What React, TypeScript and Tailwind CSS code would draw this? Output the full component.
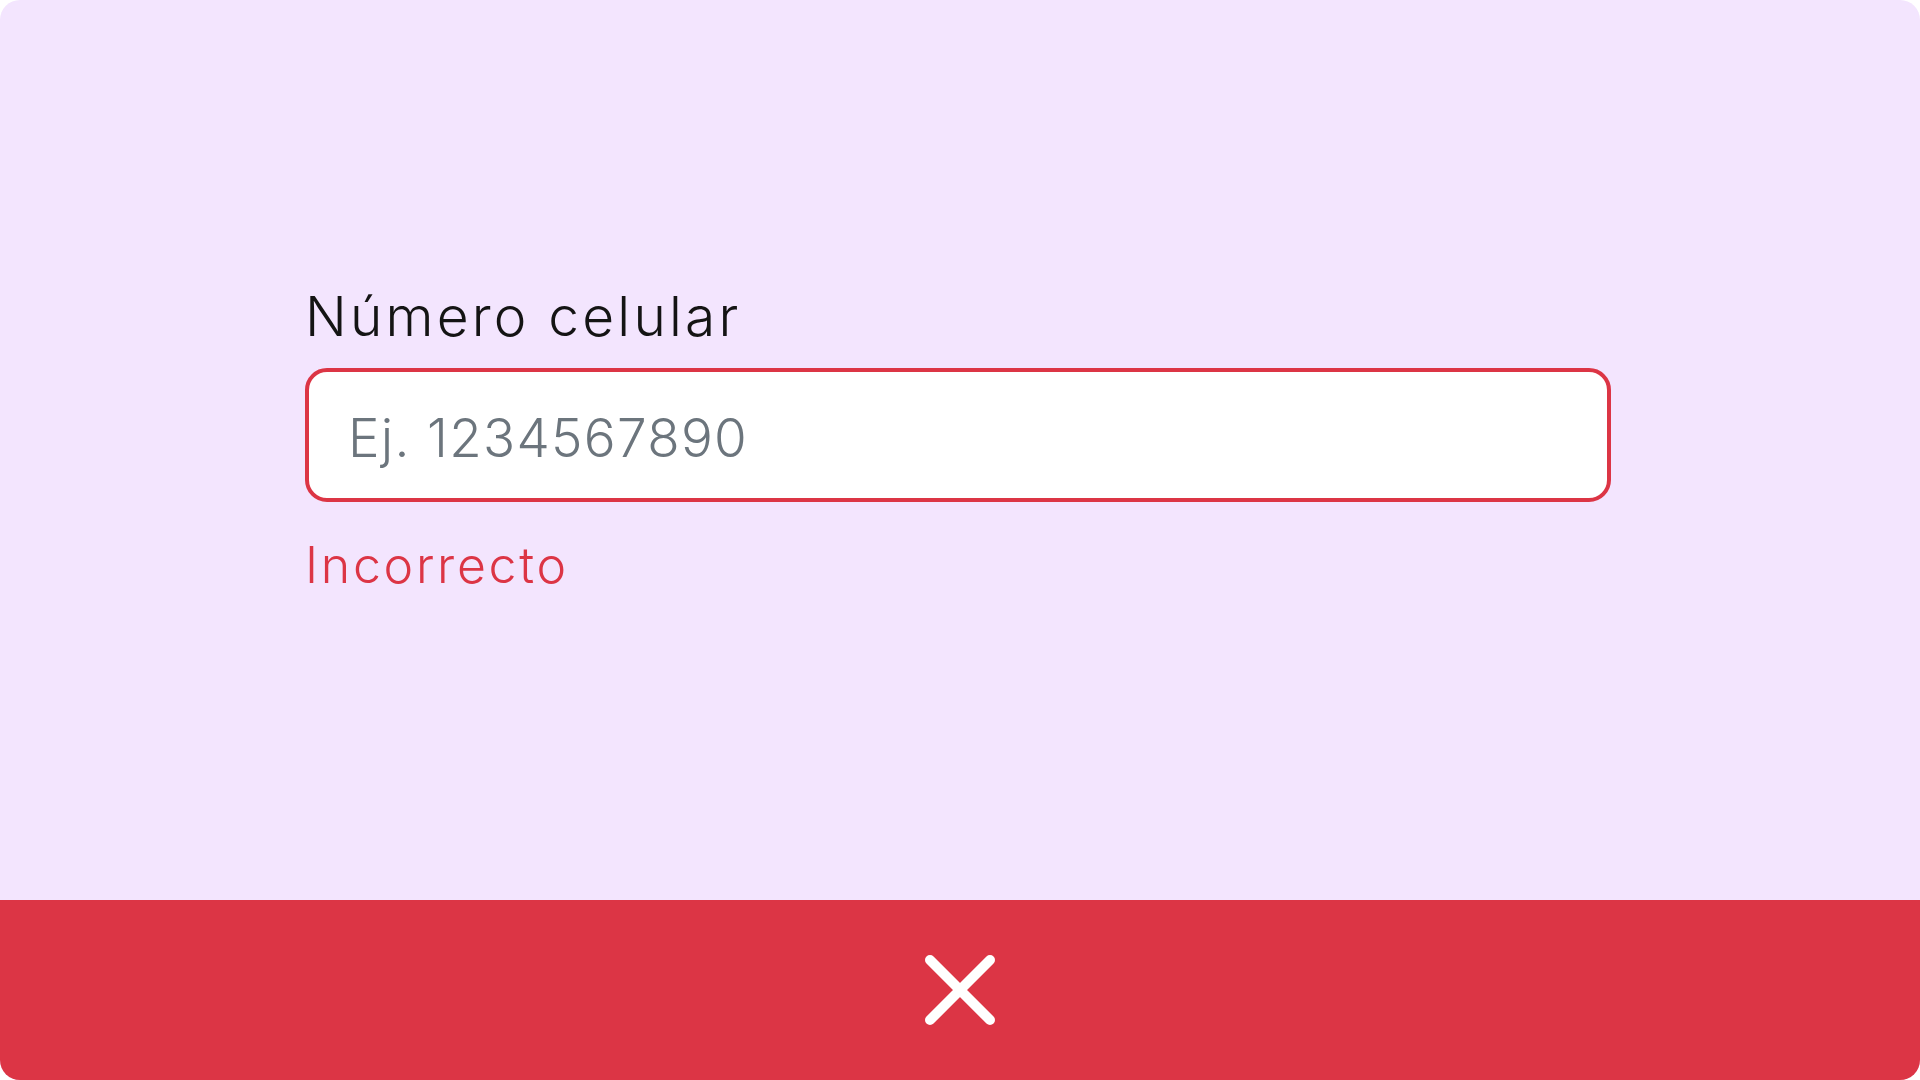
import React from 'react';

const font = { fontFamily: 'Inter, "Noto Sans", sans-serif' };

export default function App() {
  return (
    <div className="h-screen w-full bg-white" style={font}>
      <div className="flex h-full w-full flex-col overflow-hidden rounded-[20px] bg-[#f3e5fe]">
        <main className="flex flex-1 flex-col pl-[305px] pt-[283px]">
          <label className="text-[55px] font-light leading-[66px] tracking-[3.2px] text-[#141414]">Número celular</label>
          <div className="mt-[19px] flex h-[134px] w-[1306px] items-center rounded-[22px] border-[4px] border-[#dc3545] bg-white pl-[39px] pt-[8px]">
            <input
              className="w-full bg-transparent text-[53px] font-light tracking-[1.3px] text-[#2a2f36] outline-none placeholder:text-[#6c757d]"
              placeholder="Ej. 1234567890"
            />
          </div>
          <p className="mt-[33px] text-[50px] font-light leading-[60px] tracking-[2.7px] text-[#dc3545]">Incorrecto</p>
        </main>
        <footer className="flex h-[180px] items-center justify-center bg-[#dc3545]">
          <svg width="76" height="76" viewBox="0 0 76 76" fill="none" stroke="white" strokeWidth="10" strokeLinecap="round">
            <path d="M8 8 L68 68 M68 8 L8 68" />
          </svg>
        </footer>
      </div>
    </div>
  );
}
